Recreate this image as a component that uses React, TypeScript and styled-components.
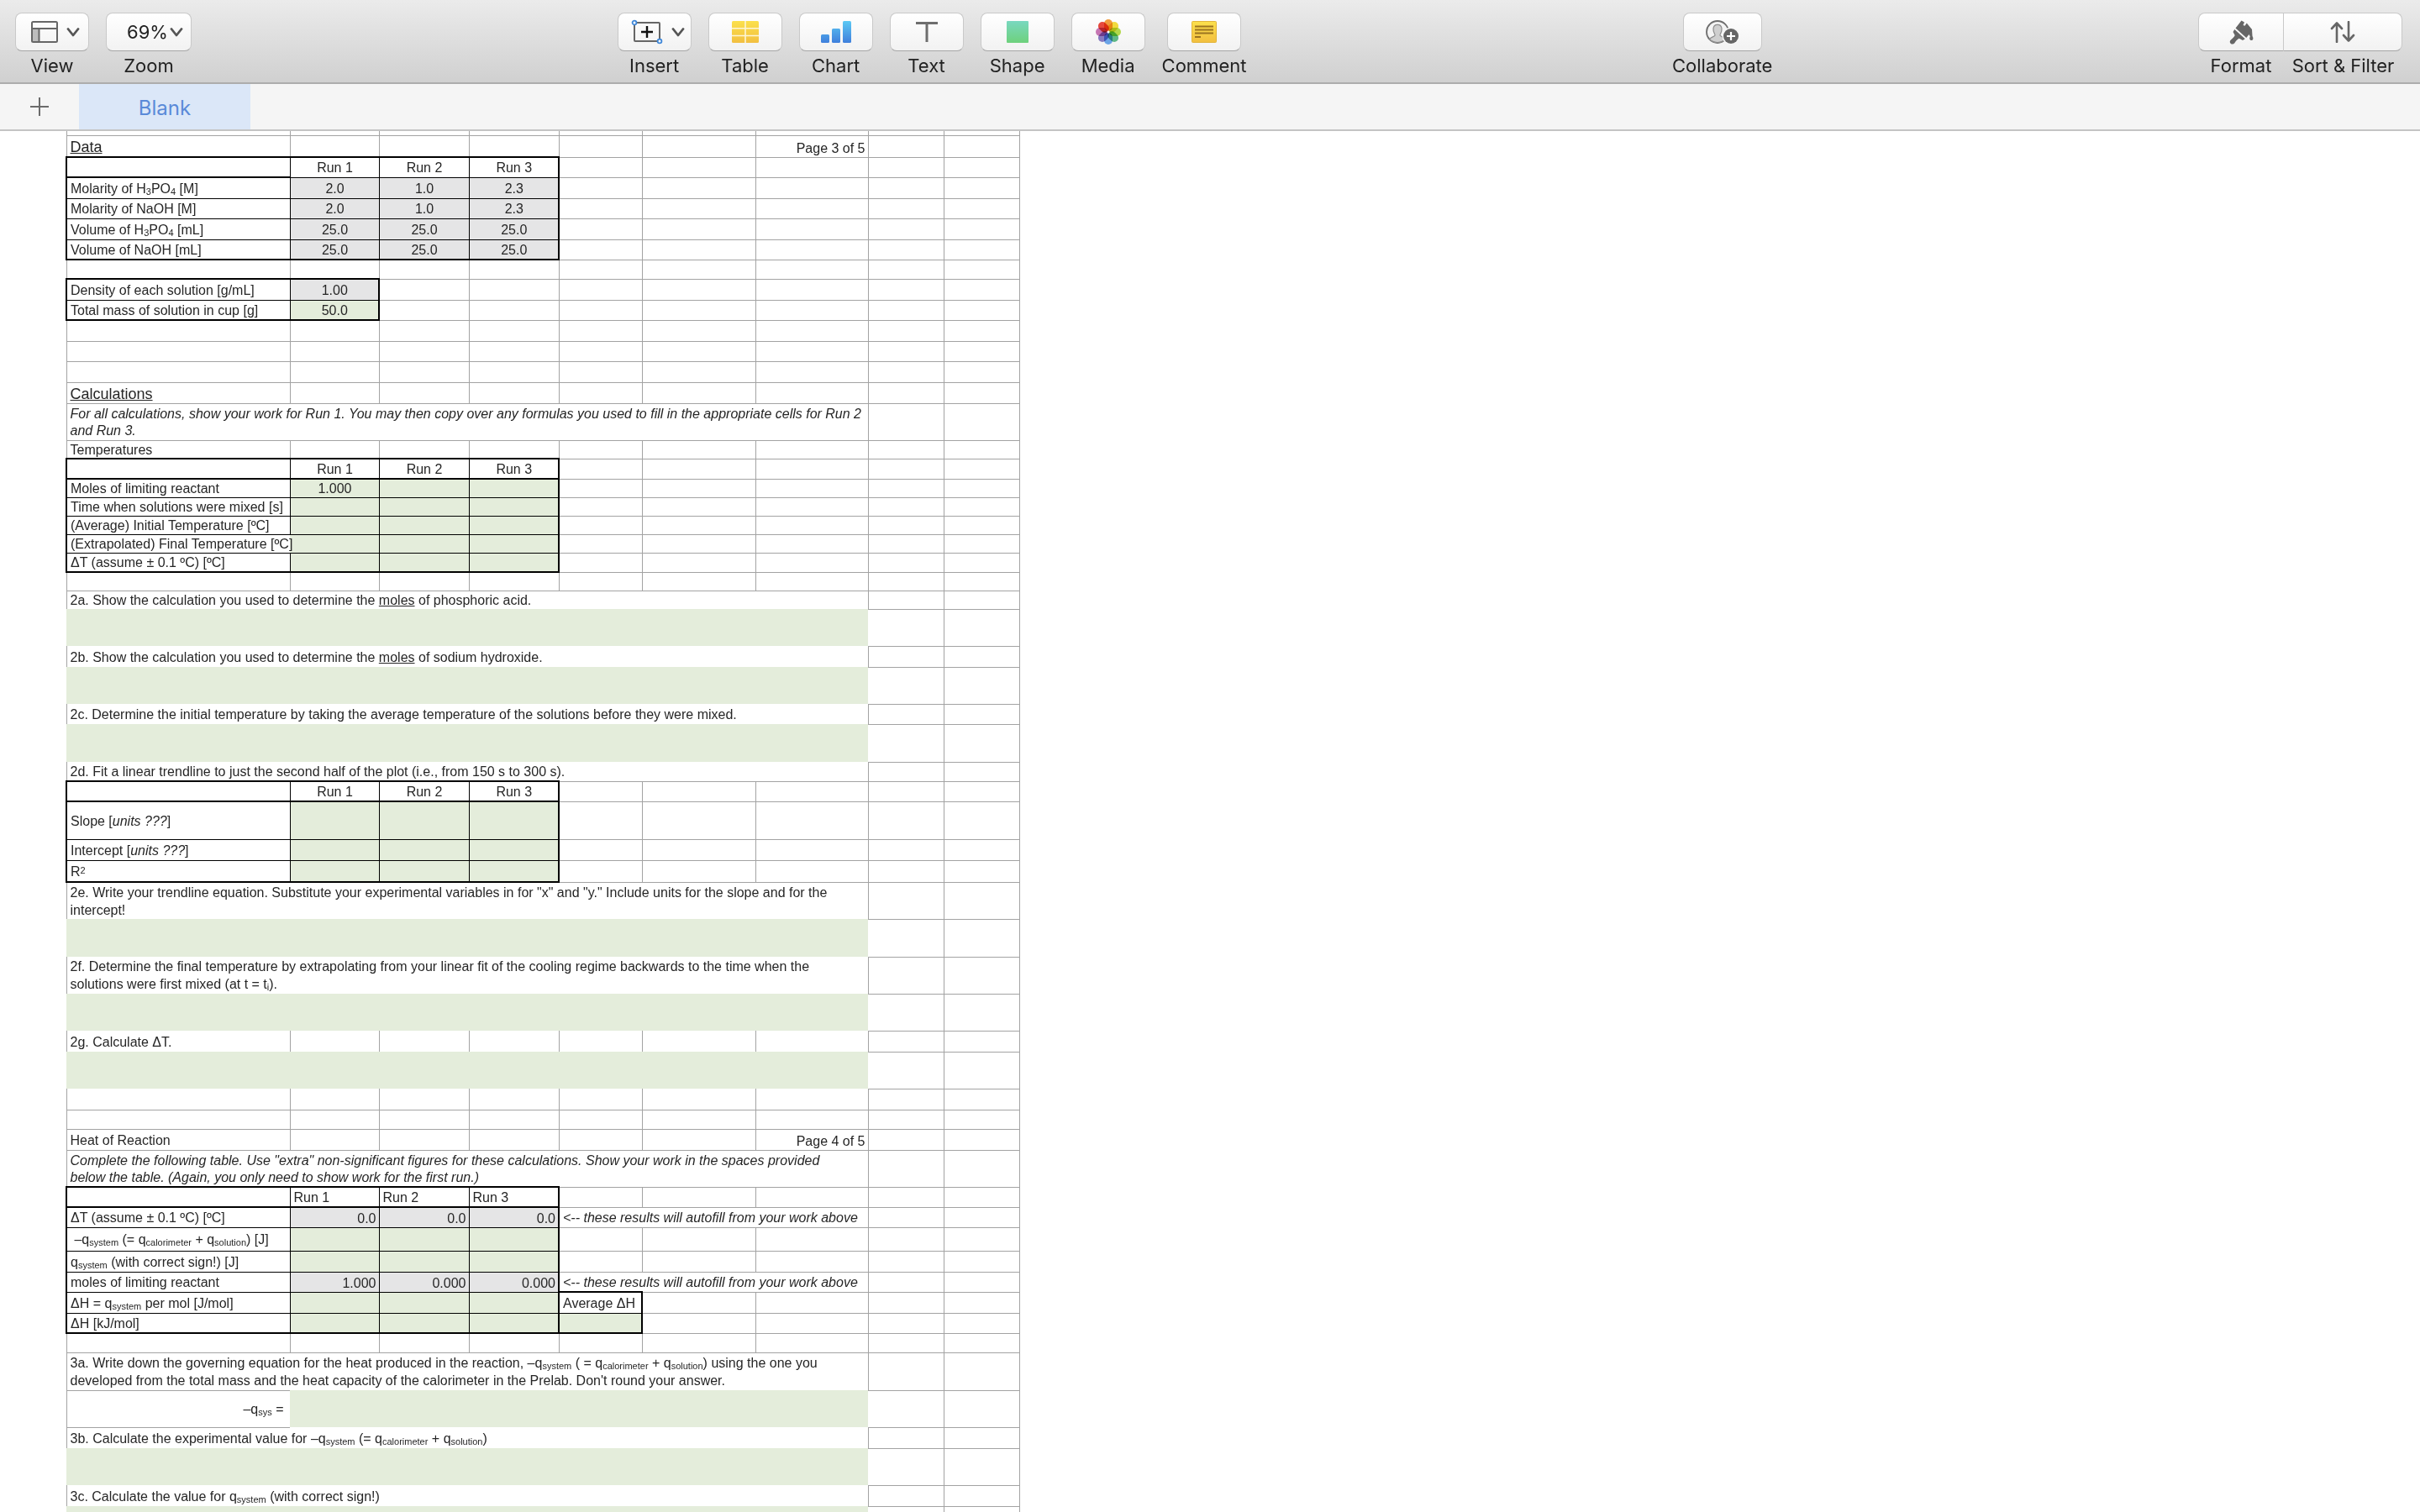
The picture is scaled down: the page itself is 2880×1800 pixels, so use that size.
import React from "react";
import styled, { createGlobalStyle, css } from "styled-components";

const GlobalStyle = createGlobalStyle`
  *, *::before, *::after { box-sizing: border-box; }
  body { margin: 0; background: #fff; }
`;

/* ---------- window chrome ---------- */

const Window = styled.div`
  display: flex;
  flex-direction: column;
  height: 100vh;
  overflow: hidden;
  background: #fff;
  font-family: Inter, "Liberation Sans", sans-serif;
`;

const Toolbar = styled.header`
  display: flex;
  flex: none;
  justify-content: space-between;
  align-items: flex-start;
  height: 100px;
  padding: 15px 21px 0 18px;
  background: linear-gradient(#ebebeb, #d0d0d0);
  border-bottom: 2px solid #adadad;
`;

const Group = styled.div<{ $joined?: boolean }>`
  display: flex;
  gap: ${(p) => (p.$joined ? "0" : "20px")};
`;

const Item = styled.div`
  display: flex;
  flex-direction: column;
  align-items: center;
  gap: 4px;
`;

const face = css`
  height: 46px;
  border: 1px solid #c9c9c9;
  border-bottom-color: #a6a6a6;
  background: linear-gradient(#ffffff, #f2f2f2);
  color: #222;
  font: 400 22px/26px Inter, "Liberation Sans", sans-serif;
`;

const ToolButton = styled.button<{ $width?: number; $side?: "left" | "right"; $menu?: boolean }>`
  ${face}
  display: flex;
  align-items: center;
  justify-content: center;
  gap: 10px;
  width: ${(p) => p.$width ?? 88}px;
  padding: 0 0 0 ${(p) => (p.$menu ? "8px" : "0")};
  border-radius: ${(p) =>
    p.$side === "left" ? "8px 0 0 8px" : p.$side === "right" ? "0 8px 8px 0" : "8px"};
  ${(p) => p.$side === "right" && "border-left: 0;"}
`;

const Caption = styled.label`
  color: #222;
  font-size: 22px;
  line-height: 26px;
  white-space: nowrap;
`;

const SelectBox = styled.div`
  display: grid;
  align-items: center;
  width: 102px;
  > * { grid-area: 1 / 1; }
  > svg { justify-self: end; margin-right: 10px; pointer-events: none; }
`;

const ZoomSelect = styled.select`
  ${face}
  appearance: none;
  width: 100%;
  padding: 0 24px;
  border-radius: 8px;
`;

const TabBar = styled.nav`
  display: flex;
  flex: none;
  height: 56px;
  background: #f5f5f5;
  border-bottom: 2px solid #c4c4c4;
`;

const AddTab = styled.button`
  display: flex;
  align-items: center;
  justify-content: center;
  width: 94px;
  padding: 0;
  border: 0;
  background: none;
`;

const Tab = styled.button`
  width: 204px;
  padding: 3px 0 0;
  border: 0;
  background: #dbe7f8;
  color: #5a8ad8;
  font: 400 24px/28px Inter, "Liberation Sans", sans-serif;
`;

/* ---------- icons ---------- */

const Chevron = () => (
  <svg width="16" height="11" viewBox="0 0 16 11">
    <path d="M2 1.5 8 9l6-7.5" fill="none" stroke="#555" strokeWidth="2.8" strokeLinecap="round" strokeLinejoin="round" />
  </svg>
);

const ViewIcon = () => (
  <svg width="32" height="26" viewBox="0 0 32 26">
    <path d="M1 9h9v16H1z" fill="#bdbdbd" />
    <rect x="1" y="1" width="30" height="24" rx="1.5" fill="none" stroke="#666" strokeWidth="2" />
    <path d="M1 9h30M9.5 9v16" stroke="#666" strokeWidth="2" />
  </svg>
);

const InsertIcon = () => (
  <svg width="38" height="30" viewBox="0 0 38 30">
    <rect x="4" y="4" width="30" height="22" rx="1" fill="none" stroke="#666" strokeWidth="2" />
    <path d="M19 8v14M12 15h14" stroke="#111" strokeWidth="2.4" />
    <circle cx="4" cy="4" r="2.4" fill="#fff" stroke="#3f87d8" strokeWidth="1.8" />
    <circle cx="34" cy="26" r="2.4" fill="#fff" stroke="#3f87d8" strokeWidth="1.8" />
  </svg>
);

const TableIcon = () => (
  <svg width="32" height="26" viewBox="0 0 32 26">
    <defs>
      <linearGradient id="gold" x1="0" y1="0" x2="0" y2="1">
        <stop offset="0" stopColor="#fbe04c" />
        <stop offset="1" stopColor="#f2bf40" />
      </linearGradient>
    </defs>
    <rect width="32" height="26" rx="1.5" fill="url(#gold)" />
    <path d="M0 8.7h32M0 17.5h32M16 0v26" stroke="#fdf6d5" strokeWidth="1.6" />
  </svg>
);

const ChartIcon = () => (
  <svg width="36" height="26" viewBox="0 0 36 26">
    <defs>
      <linearGradient id="sky" gradientUnits="userSpaceOnUse" x1="0" y1="0" x2="0" y2="26">
        <stop offset="0" stopColor="#5cc9f4" />
        <stop offset="1" stopColor="#3f7fdc" />
      </linearGradient>
    </defs>
    <g fill="url(#sky)">
      <rect y="16" width="10" height="10" rx="1.5" />
      <rect x="13" y="9" width="10" height="17" rx="1.5" />
      <rect x="26" width="10" height="26" rx="1.5" />
    </g>
  </svg>
);

const TextIcon = () => (
  <svg width="26" height="24" viewBox="0 0 26 24">
    <path d="M0 1.5h26M13 1.5V24" stroke="#6e6e6e" strokeWidth="3" />
  </svg>
);

const ShapeIcon = () => (
  <svg width="26" height="26" viewBox="0 0 26 26">
    <defs>
      <linearGradient id="mint" x1="0" y1="0" x2="0" y2="1">
        <stop offset="0" stopColor="#79d8c0" />
        <stop offset="1" stopColor="#6ed17c" />
      </linearGradient>
    </defs>
    <rect width="26" height="26" rx="1" fill="url(#mint)" />
  </svg>
);

const PETALS = ["#f39c3c", "#f5de3e", "#b8de4c", "#62bf8c", "#6fabf0", "#8c80c8", "#cb79b8", "#ea4a3e"];

const MediaIcon = () => (
  <svg width="32" height="32" viewBox="-16 -16 32 32">
    {PETALS.map((color, i) => (
      <rect
        key={color}
        x="-5"
        y="-15"
        width="10"
        height="14"
        rx="5"
        fill={color}
        transform={`rotate(${i * 45})`}
        style={{ mixBlendMode: "multiply" }}
      />
    ))}
    <circle r="1.5" fill="#fff" />
  </svg>
);

const CommentIcon = () => (
  <svg width="30" height="26" viewBox="0 0 30 26">
    <rect x="0.5" y="0.5" width="29" height="25" rx="1" fill="url(#gold)" stroke="#e2b53a" />
    <path d="M4 6.5h22M4 10.5h22M4 14.5h22M4 19h7" stroke="#9b7420" strokeWidth="1.8" />
  </svg>
);

const CollaborateIcon = () => (
  <svg width="41" height="30" viewBox="0 0 41 30">
    <circle cx="15" cy="15" r="13" fill="#f4f4f4" stroke="#6e6e6e" strokeWidth="1.8" />
    <path
      d="M5.500 23.500c1.500-2.500 6-2.800 6.500-4.500.3-1.200-2.500-4-2-8 .3-3.200 2.500-4.700 5-4.700s4.700 1.500 5 4.700c.5 4-2.300 6.800-2 8 .5 1.700 5 2 6.500 4.500-2.500 3-6 4-9.500 4s-7-1-9.500-4z"
      fill="#cfcfcf"
      stroke="#8c8c8c"
      strokeWidth="1.2"
    />
    <circle cx="31" cy="20" r="10.5" fill="#f7f7f7" />
    <circle cx="31" cy="20" r="9" fill="#666" />
    <path d="M31 15v10M26 20h10" stroke="#fff" strokeWidth="2.2" />
  </svg>
);

const FormatIcon = () => (
  <svg width="32" height="29" viewBox="0 0 32 29" fill="#666">
    <path d="M16.500.5 20 2.500 18.500 6l2 .8 2.300-3.300L29 11l.5 8c1.500 2.500 1 5-1 5s-3-2-1.700-4.600L25.500 17l-3.200 4L9.500 9.500z" />
    <path d="M8.300 11 20.800 22.300 18 24l-4.200-2.300c-1.800 1-3.300 2-5 4.800-1 1.900-3.300 2.700-4.900 1.600-1.600-1.200-1.500-3.500 0-4.700 2.400-1.900 3.800-3.400 4.800-5.400L6.500 14z" />
  </svg>
);

const SortIcon = () => (
  <svg width="30" height="26" viewBox="0 0 30 26">
    <path
      d="M8 25V2.500M2 9l6-6.500L14 9M22 1v22.500M16 17l6 6.500 6-6.500"
      fill="none"
      stroke="#666"
      strokeWidth="2.6"
      strokeLinecap="round"
      strokeLinejoin="round"
    />
  </svg>
);

const PlusIcon = () => (
  <svg width="22" height="22" viewBox="0 0 22 22">
    <path d="M11 0v22M0 11h22" stroke="#6b6b6b" strokeWidth="2" />
  </svg>
);

/* ---------- sheet ---------- */

const SheetArea = styled.main`
  flex: 1;
  min-height: 0;
  overflow: hidden;
  padding-left: 78px;
`;

const Sheet = styled.table`
  width: 1135px;
  table-layout: fixed;
  border-collapse: collapse;
  color: #262626;
  font: 400 16px/18px "Liberation Sans", Arial, sans-serif;
`;

const Row = styled.tr<{ $h: number }>`
  height: ${(p) => p.$h}px;
`;

type Edge = "grid" | "thin" | "thick" | "none";
const EDGES: Record<Edge, string> = {
  grid: "1px solid #a3a3a3",
  thin: "1px solid #000",
  thick: "2px solid #000",
  none: "0",
};
const FILLS = { grey: "#e5e5e6", green: "#e4eddb" };

type CellProps = {
  $t?: Edge;
  $r?: Edge;
  $b?: Edge;
  $l?: Edge;
  $fill?: keyof typeof FILLS;
  $align?: "left" | "center" | "right";
  $low?: boolean;
  $size?: "prose" | "note" | "heading";
};

const Cell = styled.td<CellProps>`
  padding: ${(p) => (p.$low ? "0 3px 1px 4px" : "2px 3px 0 4px")};
  white-space: nowrap;
  text-align: ${(p) => p.$align ?? "left"};
  vertical-align: ${(p) => (p.$low ? "bottom" : "middle")};
  border-top: ${(p) => EDGES[p.$t ?? "none"]};
  border-right: ${(p) => EDGES[p.$r ?? "grid"]};
  border-bottom: ${(p) => EDGES[p.$b ?? "grid"]};
  border-left: ${(p) => EDGES[p.$l ?? "none"]};
  ${(p) => p.$fill && `background: ${FILLS[p.$fill]};`}
  ${(p) => p.$size === "heading" && "font-size: 18px; text-decoration: underline;"}
  ${(p) =>
    p.$size === "prose" &&
    "line-height: 21px; padding-top: 1px; vertical-align: top; white-space: normal;"}
  ${(p) =>
    p.$size === "note" &&
    "line-height: 20px; vertical-align: top; white-space: normal; font-style: italic;"}
`;

/* Gridded cells that hold no text add nothing to the height of their row. */
const BlankCell = styled(Cell)`
  padding: 0;
`;

const Sub = styled.sub`
  font-size: 11px;
  line-height: 0;
  vertical-align: -2px;
`;

const Sup = styled.sup`
  font-size: 11px;
  line-height: 0;
  vertical-align: 3px;
`;

const COLUMNS = [266, 106, 107, 107, 99, 135, 134, 90, 90];

const Blanks = ({ n }: { n: number }) => (
  <>
    {Array.from({ length: n }, (_, i) => (
      <BlankCell key={i} />
    ))}
  </>
);

type PlainProps = {
  h: number;
  label?: React.ReactNode;
  page?: string;
  heading?: boolean;
  open?: boolean;
};

const Plain = ({ h, label, page, heading, open }: PlainProps) => {
  const b: Edge = open ? "none" : "grid";
  return (
    <Row $h={h}>
      {label ? (
        <Cell $l="grid" $b={b} $size={heading ? "heading" : undefined}>{label}</Cell>
      ) : (
        <BlankCell $l="grid" $b={b} />
      )}
      {[1, 2, 3, 4, 5].map((i) => (
        <BlankCell key={i} $b={b} />
      ))}
      {page ? <Cell $b={b} $align="right" $low>{page}</Cell> : <BlankCell $b={b} />}
      <Blanks n={2} />
    </Row>
  );
};

const Prose = ({ h, children, size, closed }: { h: number; children: React.ReactNode; size?: "prose" | "note"; closed?: boolean }) => (
  <Row $h={h}>
    <Cell colSpan={7} $l="grid" $b={closed ? "grid" : "none"} $size={size}>{children}</Cell>
    <Blanks n={2} />
  </Row>
);

const Answer = ({ h }: { h: number }) => (
  <Row $h={h}>
    <BlankCell colSpan={7} $r="none" $b="none" $fill="green" />
    <Blanks n={2} />
  </Row>
);

const RunHeader = ({ align = "center", light }: { align?: "left" | "center"; light?: boolean }) => (
  <Row $h={24}>
    <BlankCell $t="thick" $l="thick" $r="thin" $b="thick" />
    {["Run 1", "Run 2", "Run 3"].map((run, i) => (
      <Cell key={run} $t="thick" $r={i === 2 ? "thick" : "thin"} $b={light ? "thin" : "thick"} $align={align}>
        {run}
      </Cell>
    ))}
    <Blanks n={5} />
  </Row>
);

type DataProps = {
  h: number;
  label: React.ReactNode;
  values?: string[];
  fill?: "grey" | "green";
  align?: "center" | "right";
  last?: boolean;
  overflow?: boolean;
  children?: React.ReactNode;
};

const EMPTY = ["", "", ""];

const Data = ({ h, label, values = EMPTY, fill = "green", align = "center", last, overflow, children }: DataProps) => {
  const b: Edge = last ? "thick" : "thin";
  return (
    <Row $h={h}>
      <Cell $l="thick" $r={overflow ? "none" : "thin"} $b={b}>{label}</Cell>
      {values.map((v, i) => (
        <Cell key={i} $fill={fill} $align={align} $low={align === "right"} $b={b} $r={i === 2 ? "thick" : "thin"}>
          {v}
        </Cell>
      ))}
      {children ?? <Blanks n={5} />}
    </Row>
  );
};

const AutofillNote = () => (
  <>
    <Cell colSpan={3}><i>&lt;-- these results will autofill from your work above</i></Cell>
    <Blanks n={2} />
  </>
);

const QSystem = () => <>q<Sub>system</Sub></>;
const QParts = () => <>q<Sub>calorimeter</Sub> + q<Sub>solution</Sub></>;

const INSERTS = [
  { id: "table", label: "Table", icon: <TableIcon /> },
  { id: "chart", label: "Chart", icon: <ChartIcon /> },
  { id: "text", label: "Text", icon: <TextIcon /> },
  { id: "shape", label: "Shape", icon: <ShapeIcon /> },
  { id: "media", label: "Media", icon: <MediaIcon /> },
  { id: "comment", label: "Comment", icon: <CommentIcon /> },
];

export default function App() {
  return (
    <Window>
      <GlobalStyle />
      <Toolbar>
        <Group>
          <Item>
            <ToolButton id="view" $menu><ViewIcon /><Chevron /></ToolButton>
            <Caption htmlFor="view">View</Caption>
          </Item>
          <Item>
            <SelectBox>
              <ZoomSelect id="zoom" defaultValue="69%">
                <option>69%</option>
              </ZoomSelect>
              <Chevron />
            </SelectBox>
            <Caption htmlFor="zoom">Zoom</Caption>
          </Item>
        </Group>
        <Group>
          <Item>
            <ToolButton id="insert" $menu><InsertIcon /><Chevron /></ToolButton>
            <Caption htmlFor="insert">Insert</Caption>
          </Item>
          {INSERTS.map((t) => (
            <Item key={t.id}>
              <ToolButton id={t.id}>{t.icon}</ToolButton>
              <Caption htmlFor={t.id}>{t.label}</Caption>
            </Item>
          ))}
        </Group>
        <Item>
          <ToolButton id="collaborate" $width={94}><CollaborateIcon /></ToolButton>
          <Caption htmlFor="collaborate">Collaborate</Caption>
        </Item>
        <Group $joined>
          <Item>
            <ToolButton id="format" $width={102} $side="left"><FormatIcon /></ToolButton>
            <Caption htmlFor="format">Format</Caption>
          </Item>
          <Item>
            <ToolButton id="sort" $width={141} $side="right"><SortIcon /></ToolButton>
            <Caption htmlFor="sort">Sort &amp; Filter</Caption>
          </Item>
        </Group>
      </Toolbar>

      <TabBar>
        <AddTab aria-label="Add sheet"><PlusIcon /></AddTab>
        <Tab>Blank</Tab>
      </TabBar>

      <SheetArea>
        <Sheet>
          <colgroup>
            {COLUMNS.map((w, i) => (
              <col key={i} style={{ width: w }} />
            ))}
          </colgroup>
          <tbody>
            <Plain h={5} />
            <Plain h={26} label="Data" heading page="Page 3 of 5" />
            <RunHeader light />
            <Data h={25} label={<>Molarity of H<Sub>3</Sub>PO<Sub>4</Sub> [M]</>} values={["2.0", "1.0", "2.3"]} fill="grey" />
            <Data h={24} label="Molarity of NaOH [M]" values={["2.0", "1.0", "2.3"]} fill="grey" />
            <Data h={25} label={<>Volume of H<Sub>3</Sub>PO<Sub>4</Sub> [mL]</>} values={["25.0", "25.0", "25.0"]} fill="grey" />
            <Data h={24} label="Volume of NaOH [mL]" values={["25.0", "25.0", "25.0"]} fill="grey" last />
            <Plain h={23} />
            <Row $h={25}>
              <Cell $t="thick" $l="thick" $r="thin" $b="thin">Density of each solution [g/mL]</Cell>
              <Cell $t="thick" $r="thick" $b="thin" $fill="grey" $align="center">1.00</Cell>
              <Blanks n={7} />
            </Row>
            <Row $h={24}>
              <Cell $l="thick" $r="thin" $b="thick">Total mass of solution in cup [g]</Cell>
              <Cell $r="thick" $b="thick" $fill="green" $align="center">50.0</Cell>
              <Blanks n={7} />
            </Row>
            <Plain h={25} />
            <Plain h={24} />
            <Plain h={25} />
            <Plain h={25} label="Calculations" heading />
            <Prose h={44} size="note" closed>
              For all calculations, show your work for Run 1. You may then copy over any formulas you used to fill in the
              appropriate cells for Run 2 and Run 3.
            </Prose>
            <Plain h={22} label="Temperatures" />
            <RunHeader />
            <Data h={22} label="Moles of limiting reactant" values={["1.000", "", ""]} />
            <Data h={22} label="Time when solutions were mixed [s]" />
            <Data h={22} label="(Average) Initial Temperature [ºC]" />
            <Data h={22} label="(Extrapolated) Final Temperature [ºC]" overflow />
            <Data h={23} label="ΔT (assume ± 0.1 ºC) [ºC]" last />
            <Plain h={22} />
            <Prose h={22}>2a. Show the calculation you used to determine the <u>moles</u> of phosphoric acid.</Prose>
            <Answer h={44} />
            <Prose h={25}>2b. Show the calculation you used to determine the <u>moles</u> of sodium hydroxide.</Prose>
            <Answer h={44} />
            <Prose h={24}>
              2c. Determine the initial temperature by taking the average temperature of the solutions before they were
              mixed.
            </Prose>
            <Answer h={45} />
            <Prose h={23} closed>
              2d. Fit a linear trendline to just the second half of the plot (i.e., from 150 s to 300 s).
            </Prose>
            <RunHeader />
            <Data h={45} label={<>Slope [<i>units ???</i>]</>} />
            <Data h={25} label={<>Intercept [<i>units ???</i>]</>} />
            <Data h={26} label={<>R<Sup>2</Sup></>} last />
            <Prose h={44} size="prose">
              2e. Write your trendline equation. Substitute your experimental variables in for "x" and "y." Include units
              for the slope and for the intercept!
            </Prose>
            <Answer h={45} />
            <Prose h={44} size="prose">
              2f. Determine the final temperature by extrapolating from your linear fit of the cooling regime backwards to
              the time when the solutions were first mixed (at t = t<Sub>i</Sub>).
            </Prose>
            <Answer h={44} />
            <Plain h={25} label="2g. Calculate ΔT." open />
            <Answer h={44} />
            <Plain h={25} />
            <Plain h={23} />
            <Plain h={25} label="Heat of Reaction" page="Page 4 of 5" />
            <Prose h={44} size="note" closed>
              Complete the following table. Use "extra" non-significant figures for these calculations. Show your work in
              the spaces provided
              <br />
              below the table. (Again, you only need to show work for the first run.)
            </Prose>
            <RunHeader align="left" />
            <Data h={24} label="ΔT (assume ± 0.1 ºC) [ºC]" values={["0.0", "0.0", "0.0"]} fill="grey" align="right">
              <AutofillNote />
            </Data>
            <Data h={28} label={<>&nbsp;–<QSystem /> (= <QParts />) [J]</>} />
            <Data h={25} label={<><QSystem /> (with correct sign!) [J]</>} />
            <Data h={24} label="moles of limiting reactant" values={["1.000", "0.000", "0.000"]} fill="grey" align="right">
              <AutofillNote />
            </Data>
            <Data h={25} label={<>ΔH = <QSystem /> per mol [J/mol]</>}>
              <Cell $t="thick" $r="thick" $b="thin">Average ΔH</Cell>
              <Blanks n={4} />
            </Data>
            <Data h={24} label="ΔH [kJ/mol]" last>
              <BlankCell $r="thick" $b="thick" $fill="green" />
              <Blanks n={4} />
            </Data>
            <Plain h={23} />
            <Prose h={45} size="prose">
              3a. Write down the governing equation for the heat produced in the reaction, –<QSystem /> ( = <QParts />)
              using the one you developed from the total mass and the heat capacity of the calorimeter in the Prelab. Don't
              round your answer.
            </Prose>
            <Row $h={44}>
              <Cell $t="grid" $l="grid" $r="none" $align="right">–q<Sub>sys</Sub> =&nbsp;</Cell>
              <BlankCell colSpan={6} $r="none" $b="none" $fill="green" />
              <Blanks n={2} />
            </Row>
            <Prose h={25}>3b. Calculate the experimental value for –<QSystem /> (= <QParts />)</Prose>
            <Answer h={44} />
            <Prose h={25}>3c. Calculate the value for <QSystem /> (with correct sign!)</Prose>
            <Answer h={44} />
          </tbody>
        </Sheet>
      </SheetArea>
    </Window>
  );
}
